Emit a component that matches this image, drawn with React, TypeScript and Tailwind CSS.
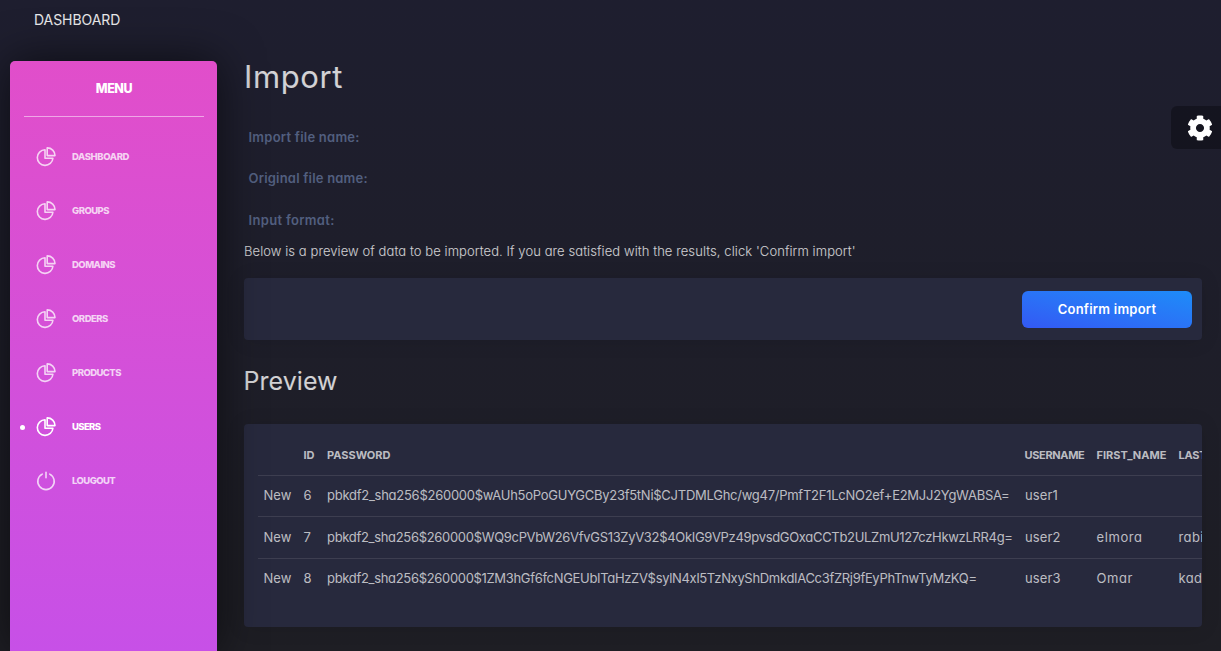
import { FaCog } from "react-icons/fa";

const PieIcon = () => (
  <svg viewBox="0 0 20 20" className="size-5" fill="none" stroke="currentColor" strokeWidth="1.6" strokeLinejoin="round">
    <path d="M9 2.8A7.8 7.8 0 1 0 16.9 11.2H9Z" />
    <path d="M11.2 .9V8.6H19A7.8 7.7 0 0 0 11.2 .9Z" />
  </svg>
);

const PowerIcon = () => (
  <svg viewBox="0 0 20 20" className="size-5" fill="none" stroke="currentColor" strokeWidth="1.6" strokeLinecap="round">
    <path d="M6.3 3.1A8.2 8.2 0 1 0 13.7 3.1" />
    <path d="M10 1.4V6.8" />
  </svg>
);

const nav = [
  { label: "DASHBOARD", tracking: "tracking-[-0.4px]" },
  { label: "GROUPS", tracking: "tracking-[-0.52px]" },
  { label: "DOMAINS", tracking: "tracking-[-0.52px]" },
  { label: "ORDERS", tracking: "tracking-[-0.5px]" },
  { label: "PRODUCTS", tracking: "tracking-[-0.55px]" },
  { label: "USERS", tracking: "tracking-[-0.62px]", active: true },
  { label: "LOUGOUT", tracking: "tracking-[-0.57px]", power: true },
];

const rows = [
  {
    id: "6",
    password: "pbkdf2_sha256$260000$wAUh5oPoGUYGCBy23f5tNi$CJTDMLGhc/wg47/PmfT2F1LcNO2ef+E2MJJ2YgWABSA=",
    tracking: "tracking-[-0.26px]",
    user: "user1",
    first: "",
    last: "",
  },
  {
    id: "7",
    password: "pbkdf2_sha256$260000$WQ9cPVbW26VfvGS13ZyV32$4OkIG9VPz49pvsdGOxaCCTb2ULZmU127czHkwzLRR4g=",
    tracking: "tracking-[-0.315px]",
    user: "user2",
    first: "elmora",
    last: "rabie",
  },
  {
    id: "8",
    password: "pbkdf2_sha256$260000$1ZM3hGf6fcNGEUbITaHzZV$sylN4xl5TzNxyShDmkdIACc3fZRj9fEyPhTnwTyMzKQ=",
    tracking: "tracking-[-0.32px]",
    user: "user3",
    first: "Omar",
    last: "kadiri",
  },
];

function Sidebar() {
  return (
    <aside className="relative z-10 ml-[10px] h-[590px] w-[207px] shrink-0 rounded-t-[5px] bg-linear-to-b from-[#e14eca] to-[#c750e7] px-[14px] shadow-[0_0_45px_0_rgba(0,0,0,0.6)]">
      <div className="flex h-[56px] w-[180px] items-center justify-center border-b border-white/50 pt-[2px] text-[12.5px] font-extrabold tracking-[-0.4px] text-white">
        MENU
      </div>
      <nav className="mt-[13px]">
        {nav.map((item) => (
          <div
            key={item.label}
            className={`relative flex h-[54px] items-center pl-3 ${item.active ? "text-white" : "text-white/75"}`}
          >
            {item.active && <span className="absolute top-[25px] left-[-4px] size-[5px] rounded-full bg-white" />}
            {item.power ? <PowerIcon /> : <PieIcon />}
            <span className={`ml-4 text-[9.5px] leading-none font-[850] ${item.tracking}`}>{item.label}</span>
          </div>
        ))}
      </nav>
    </aside>
  );
}

export default function App() {
  return (
    <div className="relative flex h-[651px] w-[1221px] flex-col overflow-hidden bg-linear-to-b from-[#1e1e2f] to-[#1e1e24] font-['Inter',sans-serif] [font-feature-settings:'cv11']">
      <header className="flex h-[61px] shrink-0 pt-[9px] pl-[34px] text-[14px] leading-[22px] tracking-[-0.05px] text-white/90">
        DASHBOARD
      </header>
      <div className="flex">
        <Sidebar />
        <main className="ml-[27px] w-[958px] text-white/80">
          <h1 className="h-[60px] text-[31px] leading-[31px] font-normal tracking-[0.6px]">Import</h1>
          <div className="flex flex-col pl-[4.5px] text-[13px] font-semibold text-[#525f7f]">
            <span className="h-[41px] leading-[32px] tracking-[0.24px]">Import file name:</span>
            <span className="h-[42px] leading-[32px] tracking-[0.2px]">Original file name:</span>
            <span className="h-[36px] leading-[32px] tracking-[0.32px]">Input format:</span>
          </div>
          <p className="h-[38px] text-[13px] leading-[22px] font-[350] tracking-[0.08px] whitespace-nowrap">
            Below is a preview of data to be imported. If you are satisfied with the results, click 'Confirm import'
          </p>
          <section className="flex h-[62px] justify-end rounded-[4px] bg-[#27293d] px-[10px] pt-[13px] shadow-[0_1px_20px_0_rgba(0,0,0,0.1)]">
            <button className="h-[37px] w-[170px] rounded-[6px] bg-linear-to-bl from-[#1d8cf8] to-[#3358f4] text-[13px] font-semibold tracking-[0.22px] text-white">
              Confirm import
            </button>
          </section>
          <h2 className="-ml-px mt-[25px] h-[59px] pl-[0.5px] text-[25px] leading-[33px] font-normal tracking-[0.05px]">Preview</h2>
          <section className="h-[203px] overflow-hidden rounded-[4px] bg-[#27293d] pt-[10px] pl-[14px] text-white/70 shadow-[0_1px_20px_0_rgba(0,0,0,0.1)]">
            <table className="w-[1005px] table-fixed border-collapse text-left text-[13px] whitespace-nowrap">
              <colgroup>
                <col className="w-[40px]" />
                <col className="w-[23px]" />
                <col className="w-[698px]" />
                <col className="w-[72px]" />
                <col className="w-[82px]" />
                <col className="w-[90px]" />
              </colgroup>
              <thead>
                <tr className="h-[41px] border-b border-white/10 text-[11px] font-bold">
                  <th />
                  <th className="pt-px pl-[5.5px]">ID</th>
                  <th className="pt-px pl-[6px]">PASSWORD</th>
                  <th className="pt-px pl-[5.5px] tracking-[-0.35px]">USERNAME</th>
                  <th className="pt-px pl-[5.5px]">FIRST_NAME</th>
                  <th className="pt-px pl-[5.5px] tracking-[-0.2px]">LAST_NAME</th>
                </tr>
              </thead>
              <tbody>
                {rows.map((row) => (
                  <tr key={row.id} className="h-[41.5px] border-b border-white/10 last:border-b-0">
                    <td className="pl-[5.5px]">New</td>
                    <td className="pl-[5.5px]">{row.id}</td>
                    <td className={`pl-[6px] ${row.tracking}`}>{row.password}</td>
                    <td className="pl-[6px] tracking-[0.1px]">{row.user}</td>
                    <td className="pl-[5.5px] tracking-[0.6px]">{row.first}</td>
                    <td className="pl-[5.5px] tracking-[0.4px]">{row.last}</td>
                  </tr>
                ))}
              </tbody>
            </table>
          </section>
        </main>
      </div>
      <div className="absolute top-[106px] right-0 flex h-[43px] w-[50px] items-center rounded-l-[6px] bg-black/30 pl-[16px] text-white">
        <FaCog className="size-[26px]" />
      </div>
    </div>
  );
}
